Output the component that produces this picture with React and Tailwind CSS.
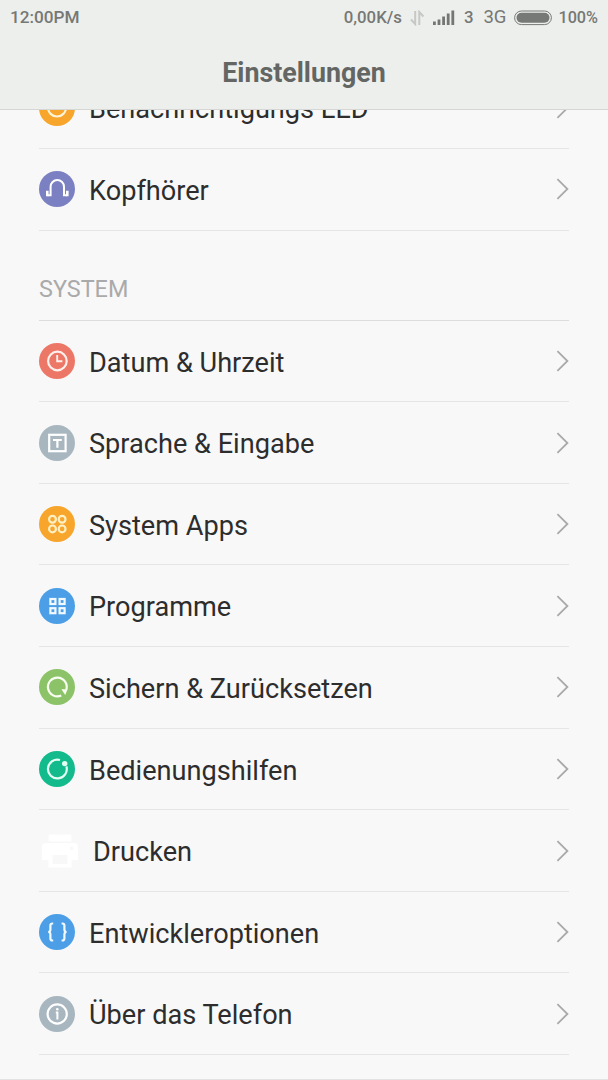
const Chevron = () => (
  <svg className="w-4 h-6 shrink-0" viewBox="0 0 16 24" fill="none" stroke="#a9a9a9" strokeWidth="1.8">
    <path d="M4.4 2.2L14.4 12L4.4 21.8" />
  </svg>
);

const LedIcon = () => (
  <>
    <circle cx="18" cy="18" r="18" fill="#f7a52b" />
    <circle cx="18" cy="17.5" r="9" stroke="#fff3d8" strokeWidth="2.2" />
  </>
);

const HeadphonesIcon = () => (
  <>
    <circle cx="18" cy="18" r="18" fill="#7b80c2" />
    <path d="M8.5 24.3h3.1V15.8a6.7 6.7 0 0 1 13.4 0v8.5h3" stroke="#fff" strokeWidth="2" />
    <path d="M7 19.8h2.6v5.4H7zM27 19.8h2.6v5.4H27z" fill="#fff" />
  </>
);

const ClockIcon = () => (
  <>
    <circle cx="18" cy="18" r="18" fill="#ed7766" />
    <circle cx="18.4" cy="18" r="9.3" stroke="#fff0ec" strokeWidth="2.2" />
    <path d="M18.2 12v6.3h5.2" stroke="#fff0ec" strokeWidth="1.9" />
  </>
);

const LanguageIcon = () => (
  <>
    <circle cx="18" cy="18" r="18" fill="#a8b6bf" />
    <rect x="10.2" y="9.8" width="16.4" height="16.4" stroke="#fff" strokeWidth="2.2" />
    <path d="M14 15h8.8M18.4 15v7.8" stroke="#fff" strokeWidth="2.2" />
  </>
);

const SystemAppsIcon = () => (
  <>
    <circle cx="18" cy="18" r="18" fill="#f7a52b" />
    <g stroke="#fff0c4" strokeWidth="2.2">
      <circle cx="13.5" cy="13.3" r="3.4" />
      <circle cx="23.1" cy="13.3" r="3.4" />
      <circle cx="13.5" cy="22.9" r="3.4" />
      <circle cx="23.1" cy="22.9" r="3.4" />
    </g>
  </>
);

const ProgramsIcon = () => (
  <>
    <circle cx="18" cy="18" r="18" fill="#4c9fe6" />
    <g stroke="#f2f9ff" strokeWidth="2.2">
      <rect x="11.4" y="11" width="5" height="5" />
      <rect x="20.6" y="11" width="5" height="5" />
      <rect x="11.4" y="20.2" width="5" height="5" />
      <rect x="20.6" y="20.2" width="5" height="5" />
    </g>
  </>
);

const BackupIcon = () => (
  <>
    <circle cx="18" cy="18" r="18" fill="#8cc368" />
    <path d="M22.3 26.5A9.4 9.4 0 1 1 27.4 20.5" stroke="#f8fff0" strokeWidth="2.2" />
    <path d="M22.4 20.2h6.2l-2.4 5.8z" fill="#f8fff0" />
  </>
);

const AccessibilityIcon = () => (
  <>
    <circle cx="18" cy="18" r="18" fill="#12ba8c" />
    <path d="M21 9A9.4 9.4 0 1 0 27.4 15.4" stroke="#e2fff2" strokeWidth="2.2" />
    <circle cx="25.7" cy="12.6" r="2.7" fill="#e2fff2" />
  </>
);

const DeveloperIcon = () => (
  <>
    <circle cx="18" cy="18" r="18" fill="#4c9fe6" />
    <g stroke="#f2f9ff" strokeWidth="2.2">
      <path d="M14.2 9.5h-.8a2 2 0 0 0-2 2v4.1q0 2.4-2.2 2.4q2.2 0 2.2 2.4v4.1a2 2 0 0 0 2 2h.8" />
      <path d="M22.6 9.5h.8a2 2 0 0 1 2 2v4.1q0 2.4 2.2 2.4q-2.2 0-2.2 2.4v4.1a2 2 0 0 1-2 2h-.8" />
    </g>
  </>
);

const AboutIcon = () => (
  <>
    <circle cx="18" cy="18" r="18" fill="#a8b6bf" />
    <circle cx="18.2" cy="18" r="9.6" stroke="#fff" strokeWidth="2.2" />
    <path d="M16.8 16.6h1.6v6.8" stroke="#fff" strokeWidth="2" />
    <circle cx="18.3" cy="13.2" r="1.3" fill="#fff" />
  </>
);

const PrinterIcon = () => (
  <svg className="w-10 h-9 shrink-0" viewBox="0 0 40 36" fill="#fff">
    <path d="M9.5 1.5h23v7h-23z" />
    <path
      fillRule="evenodd"
      d="M7 10h28a4 4 0 0 1 4 4v13h-6.5v7.5h-23V27H3V14a4 4 0 0 1 4-4zM13.5 22v9h15v-9zM31 15.2a1.8 1.8 0 1 0 3.6 0a1.8 1.8 0 1 0-3.6 0z"
    />
  </svg>
);

const topItems = [
  { label: 'Benachrichtigungs LED', icon: LedIcon },
  { label: 'Kopfhörer', icon: HeadphonesIcon },
];

const systemItems = [
  { label: 'Datum & Uhrzeit', icon: ClockIcon },
  { label: 'Sprache & Eingabe', icon: LanguageIcon },
  { label: 'System Apps', icon: SystemAppsIcon },
  { label: 'Programme', icon: ProgramsIcon },
  { label: 'Sichern & Zurücksetzen', icon: BackupIcon },
  { label: 'Bedienungshilfen', icon: AccessibilityIcon },
  { label: 'Drucken', printer: true },
  { label: 'Entwickleroptionen', icon: DeveloperIcon },
  { label: 'Über das Telefon', icon: AboutIcon },
];

function SettingsRow({ item }) {
  const Icon = item.icon;

  return (
    <li className="flex items-center h-[81.6px] border-b border-[#e5e5e5]">
      {item.printer ? (
        <PrinterIcon />
      ) : (
        <svg className="w-9 h-9 shrink-0" viewBox="0 0 36 36" fill="none">
          <Icon />
        </svg>
      )}
      <span className="flex-1 pl-3.5 pt-[3.4px] text-[27.15px] leading-8 whitespace-nowrap text-[#2d2d2d]">
        {item.label}
      </span>
      <Chevron />
    </li>
  );
}

function StatusBar() {
  return (
    <div className="flex items-center justify-between h-9 px-[10px] text-[16.8px] font-medium text-[#767875]">
      <span className="text-[17.2px]">12:00PM</span>
      <div className="flex items-center">
        <span>0,00K/s</span>
        <svg className="w-[15px] h-4 ml-2" viewBox="0 0 15 16" fill="none" stroke="#c6c8c5" strokeWidth="2">
          <path d="M5.2 1v13L1 9.5M9.3 15V2L13.5 6.5" />
        </svg>
        <svg className="w-[22px] h-4 ml-2" viewBox="0 0 22 16" fill="#747673">
          <rect x="0" y="11.5" width="2.8" height="3.5" />
          <rect x="4.6" y="9.5" width="2.8" height="5.5" />
          <rect x="9.2" y="6.5" width="2.8" height="8.5" />
          <rect x="13.8" y="3.5" width="2.8" height="11.5" />
          <rect x="18.4" y="0.5" width="2.8" height="14.5" />
        </svg>
        <span className="ml-[9px]">3</span>
        <span className="ml-[10px] text-[18.5px] font-normal">3G</span>
        <svg className="w-[38px] h-4 ml-2" viewBox="0 0 38 16">
          <rect x="0.6" y="1" width="36.8" height="13.6" rx="6.8" fill="none" stroke="#777976" strokeWidth="1" />
          <rect x="2.5" y="2.8" width="33" height="10" rx="5" fill="#777976" />
        </svg>
        <span className="ml-1.5 text-[16.2px]">100%</span>
      </div>
    </div>
  );
}

export default function App() {
  return (
    <div className="flex flex-col w-[608px] h-[1080px] overflow-hidden bg-[#f8f8f8] border-b border-[#e2e2e2] font-['Roboto',sans-serif]">
      <header className="shrink-0 h-[110px] bg-[#edefec] border-b border-[#d6d7d5]">
        <StatusBar />
        <h1 className="pt-[21px] text-center text-[26.8px] leading-8 font-bold text-[#646663]">Einstellungen</h1>
      </header>

      <main className="flex-1 min-h-0 overflow-hidden px-[39px]">
        {/* List is scrolled, first row sits partly under the header */}
        <ul className="-mt-[42.5px]">
          {topItems.map((item) => (
            <SettingsRow key={item.label} item={item} />
          ))}
        </ul>

        <h2 className="h-[90px] pt-[42px] border-b border-[#dcdcdc] text-[23.4px] leading-8 text-[#aaaaaa]">SYSTEM</h2>

        <ul>
          {systemItems.map((item) => (
            <SettingsRow key={item.label} item={item} />
          ))}
        </ul>
      </main>
    </div>
  );
}
